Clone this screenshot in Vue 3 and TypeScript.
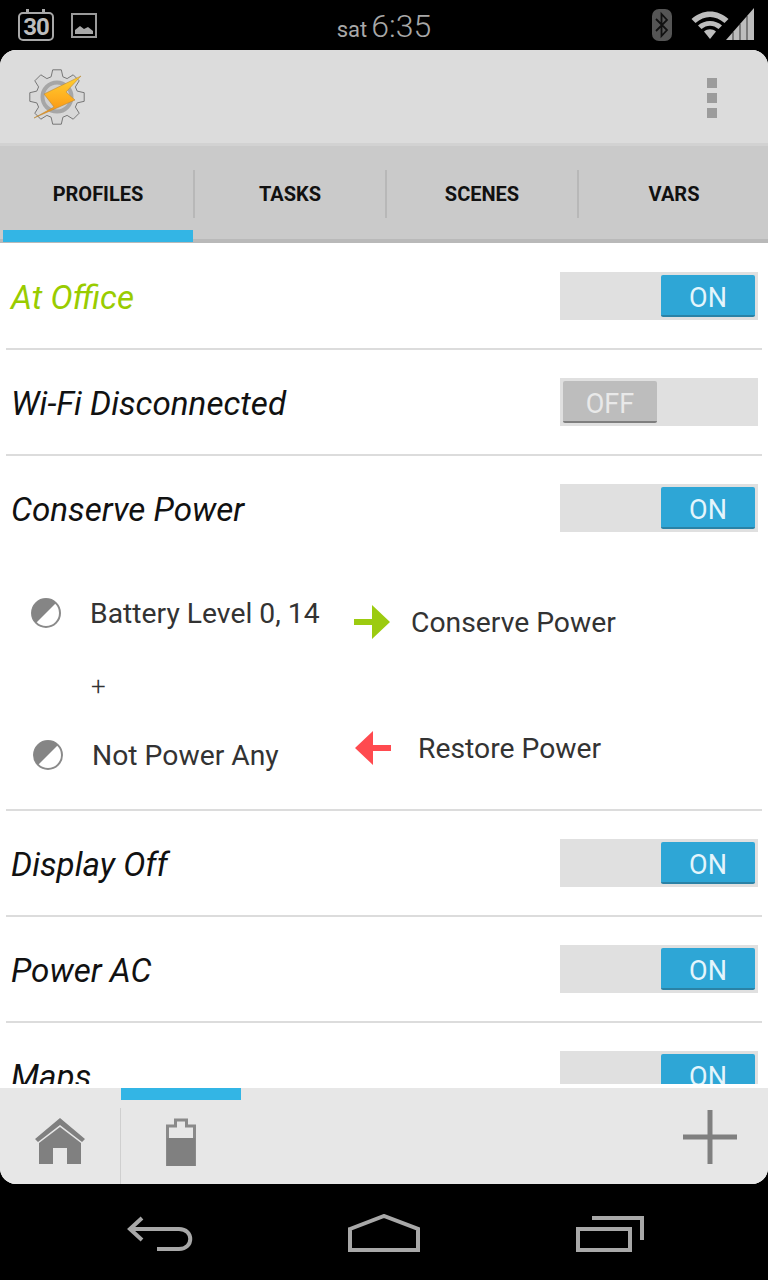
<script setup lang="ts">
const tabs = ['PROFILES', 'TASKS', 'SCENES', 'VARS']

// the gear in the logo, 8 teeth round the middle of its 58x58 box
const gearPath = (() => {
  const pts: string[] = []
  const teeth = 8
  for (let i = 0; i < teeth; i++) {
    const a = (i / teeth) * Math.PI * 2 - Math.PI / 2
    const step = (Math.PI * 2) / teeth
    const add = (r: number, off: number) => {
      pts.push(`${(28 + r * Math.cos(a + off * step)).toFixed(1)},${(28 + r * Math.sin(a + off * step)).toFixed(1)}`)
    }
    add(21, -0.36)
    add(27.5, -0.2)
    add(27.5, 0.2)
    add(21, 0.36)
  }
  return 'M' + pts.join(' L') + ' Z'
})()
</script>

<template>
  <div class="phone">
    <header class="status">
      <div class="status-left">
        <div class="calendar"><span>30</span></div>
        <svg width="26" height="25" viewBox="0 0 26 25">
          <rect x="1" y="1" width="24" height="23" fill="none" stroke="#9a9a9a" stroke-width="2" />
          <path d="M4 21 V17 L9 13 L13 16 L17 14 L22 18 V21 Z" fill="#a8a8a8" />
        </svg>
      </div>
      <div class="clock"><span class="day">sat</span> <span class="time">6:35</span></div>
      <div class="status-right">
        <svg class="bt" width="22" height="33" viewBox="0 0 22 33">
          <rect x="1" y="0" width="20" height="32" rx="7" fill="#555" />
          <path d="M5 10 L16 21 L10.5 27 V5 L16 11 L5 22" fill="none" stroke="#111" stroke-width="1.8" />
        </svg>
        <svg width="66" height="33" viewBox="0 0 66 33">
          <g transform="translate(2.5 1)">
            <path d="M1 10 C12 0 27 0 38 10 L34 14 C25 6 14 6 5 14 Z" fill="#bdbdbd" />
            <path d="M7.5 16.5 C14 10.5 25 10.5 31.5 16.5 L28 20 C23 15.5 16 15.5 11 20 Z" fill="#bdbdbd" />
            <path d="M13.5 22.5 C17 19.5 22 19.5 25.5 22.5 L19.5 30 Z" fill="#bdbdbd" />
          </g>
          <path d="M38 32 L66 0 V32 Z" fill="#bdbdbd" />
          <path d="M45 32 V24 M52 32 V16 M59 32 V8" stroke="#000" stroke-width="1" opacity="0.7" />
        </svg>
      </div>
    </header>

    <div class="app">
      <div class="action-bar">
        <svg class="logo" width="58" height="58" viewBox="0 0 58 58">
          <defs>
            <linearGradient id="bolt" x1="0" y1="0" x2="0" y2="1">
              <stop offset="0" stop-color="#ffd030" />
              <stop offset="0.5" stop-color="#ffb020" />
              <stop offset="1" stop-color="#f58a10" />
            </linearGradient>
          </defs>
          <path :d="gearPath" fill="#d8d8d8" stroke="#777" stroke-width="1" />
          <circle cx="28" cy="28" r="14.5" fill="#cfcfcf" stroke="#a6a6a6" stroke-width="4" />
          <path d="M52 7 L15 25 L25 38 L5 49 L46 31 L37 23 Z" fill="url(#bolt)" stroke="#b98a3a" stroke-width="0.6" />
        </svg>
        <div class="overflow">
          <i></i>
          <i></i>
          <i></i>
        </div>
      </div>

      <nav class="tabs">
        <div v-for="(tab, i) in tabs" :key="tab" class="tab" :class="{ active: i === 0 }">
          <span>{{ tab }}</span>
        </div>
      </nav>

      <main class="list">
        <section class="row">
          <div class="row-head">
            <span class="title green">At Office</span>
            <div class="toggle on"><div class="knob">ON</div></div>
          </div>
        </section>
        <section class="row">
          <div class="row-head">
            <span class="title">Wi-Fi Disconnected</span>
            <div class="toggle"><div class="knob">OFF</div></div>
          </div>
        </section>
        <section class="row">
          <div class="row-head">
            <span class="title">Conserve Power</span>
            <div class="toggle on"><div class="knob">ON</div></div>
          </div>
          <div class="details">
            <div class="contexts">
              <div class="context first">
                <svg width="32" height="32" viewBox="0 0 32 32">
                  <circle cx="16" cy="16" r="14" fill="#fff" stroke="#8a8a8a" stroke-width="2" />
                  <path d="M6 26 A14 14 0 0 1 26 6 Z" fill="#858585" />
                </svg>
                <span>Battery Level 0, 14</span>
              </div>
              <div class="plus">+</div>
              <div class="context second">
                <svg width="32" height="32" viewBox="0 0 32 32">
                  <circle cx="16" cy="16" r="14" fill="#fff" stroke="#8a8a8a" stroke-width="2" />
                  <path d="M6 26 A14 14 0 0 1 26 6 Z" fill="#858585" />
                </svg>
                <span>Not Power Any</span>
              </div>
            </div>
            <div class="actions">
              <div class="action enter">
                <svg width="38" height="36" viewBox="0 0 38 36">
                  <path d="M1 15 H19 V1 L37 18 L19 35 V21 H1 Z" fill="#9ccb10" />
                </svg>
                <span>Conserve Power</span>
              </div>
              <div class="action exit">
                <svg width="38" height="36" viewBox="0 0 38 36">
                  <path d="M37 15 H19 V1 L1 18 L19 35 V21 H37 Z" fill="#ff4a4f" />
                </svg>
                <span>Restore Power</span>
              </div>
            </div>
          </div>
        </section>
        <section class="row">
          <div class="row-head">
            <span class="title">Display Off</span>
            <div class="toggle on"><div class="knob">ON</div></div>
          </div>
        </section>
        <section class="row">
          <div class="row-head">
            <span class="title">Power AC</span>
            <div class="toggle on"><div class="knob">ON</div></div>
          </div>
        </section>
        <section class="row">
          <div class="row-head">
            <span class="title">Maps</span>
            <div class="toggle on"><div class="knob">ON</div></div>
          </div>
        </section>
      </main>

      <footer class="bottom">
        <div class="home-slot">
          <svg width="52" height="48" viewBox="0 0 52 48">
            <path d="M1 22 L26 1 L51 22 L48 25 L26 8 L4 25 Z" fill="#808080" />
            <path d="M5 26 L26 10 L47 26 V47 H33 V31 H19 V47 H5 Z" fill="#808080" />
          </svg>
        </div>
        <div class="project-slot">
          <svg width="30" height="48" viewBox="0 0 30 48">
            <path d="M1.5 8 H9.5 V2 H20.5 V8 H28.5 V47 H1.5 Z" fill="#e7e7e7" stroke="#8a8a8a" stroke-width="3" />
            <rect x="1" y="20" width="28" height="28" fill="#808080" />
          </svg>
        </div>
        <svg class="add" width="54" height="54" viewBox="0 0 54 54">
          <path d="M0 27 H54 M27 0 V54" stroke="#808080" stroke-width="5" />
        </svg>
      </footer>
    </div>

    <div class="nav">
      <svg width="66" height="36" viewBox="0 0 66 36">
        <path d="M15 2 L3 13 L15 24 M3 13 H52 C67 13 67 33 52 33 H30" fill="none" stroke="#a8a8a8" stroke-width="4" />
      </svg>
      <svg width="72" height="38" viewBox="0 0 72 38">
        <path d="M2 15 L36 2 L70 15 V36 H2 Z" fill="none" stroke="#a8a8a8" stroke-width="4" />
      </svg>
      <svg width="68" height="36" viewBox="0 0 68 36">
        <rect x="2" y="13" width="52" height="21" fill="none" stroke="#a8a8a8" stroke-width="4" />
        <path d="M16 2 H66 V24" fill="none" stroke="#a8a8a8" stroke-width="4" />
      </svg>
    </div>
  </div>
</template>

<style scoped>
.phone {
  width: 768px;
  height: 1280px;
  background: #000;
  display: flex;
  flex-direction: column;
  overflow: hidden;
  font-family: Roboto, "Liberation Sans", sans-serif;
}

.status {
  height: 50px;
  flex: none;
  display: grid;
  grid-template-columns: 1fr auto 1fr;
  align-items: start;
}
.status-left {
  display: flex;
  align-items: flex-start;
  gap: 17px;
  padding: 12px 0 0 18px;
}
.status-left svg {
  margin-top: 1px;
}
.calendar {
  width: 36px;
  height: 29px;
  box-sizing: border-box;
  border: 2px solid #a8a8a8;
  border-radius: 5px;
  display: flex;
  align-items: center;
  justify-content: center;
  color: #bdbdbd;
  font-size: 24px;
  font-weight: 700;
  letter-spacing: -1px;
  position: relative;
}
.calendar::before,
.calendar::after {
  content: "";
  position: absolute;
  top: -5px;
  width: 3px;
  height: 4px;
  background: #a8a8a8;
}
.calendar::before {
  left: 6px;
}
.calendar::after {
  right: 7px;
}
.clock {
  color: #a8a8a8;
  padding-top: 8px;
  line-height: 36px;
}
.day {
  font-size: 22px;
}
.time {
  font-size: 32px;
  font-weight: 300;
}
.status-right {
  display: flex;
  justify-content: flex-end;
  padding: 8px 14px 0 0;
  gap: 15px;
}
.bt {
  margin-top: 1px;
}

.app {
  height: 1134px;
  flex: none;
  background: #fff;
  border-radius: 16px;
  overflow: hidden;
  display: flex;
  flex-direction: column;
}

.action-bar {
  height: 93px;
  flex: none;
  background: #dcdcdc;
  display: flex;
  align-items: center;
  justify-content: space-between;
  padding: 0 51px 0 29px;
}
.logo {
  margin-top: 2px;
}
.overflow {
  display: flex;
  flex-direction: column;
  gap: 5px;
  margin-top: 3px;
}
.overflow i {
  display: block;
  width: 10px;
  height: 10px;
  background: #9c9c9c;
}

.tabs {
  height: 100px;
  flex: none;
  box-sizing: border-box;
  background: #cacaca;
  border-top: 3px solid #d2d2d2;
  border-bottom: 4px solid #b9b9b9;
  display: flex;
}
.tab {
  flex: 1;
  display: flex;
  align-items: center;
  justify-content: center;
  position: relative;
  font-size: 20px;
  font-weight: 700;
  color: #111;
  padding: 2px 0 0 4px;
}
.tab + .tab::before {
  content: "";
  position: absolute;
  left: 1px;
  top: 24px;
  width: 2px;
  height: 48px;
  background: #b8b8b8;
}
.tab.active::after {
  content: "";
  position: absolute;
  left: 3px;
  right: -1px;
  bottom: -3px;
  height: 12px;
  background: #33b5e5;
}

.list {
  height: 841px;
  flex: none;
  overflow: hidden;
  box-sizing: border-box;
  padding-top: 1px;
  margin-bottom: 4px;
}
.row {
  margin: 0 6px;
  border-bottom: 2px solid #dcdcdc;
}
.row-head {
  height: 104px;
  display: flex;
  align-items: center;
  justify-content: space-between;
  padding: 0 4px 0 5px;
}
.title {
  font-size: 33.2px;
  font-style: italic;
  color: #111;
  padding-top: 2px;
}
.title.green {
  color: #99cc00;
}

.toggle {
  width: 198px;
  height: 48px;
  box-sizing: border-box;
  background: #e0e0e0;
  padding: 3px;
  display: flex;
}
.toggle.on {
  justify-content: flex-end;
}
.knob {
  width: 94px;
  height: 42px;
  box-sizing: border-box;
  border-radius: 2px;
  border-bottom: 2px solid #7f7f7f;
  background: #bdbdbd;
  color: #e9e9e9;
  font-size: 27px;
  padding-top: 5px;
  display: flex;
  align-items: center;
  justify-content: center;
}
.toggle.on .knob {
  background: #2ea6d6;
  border-bottom-color: #2a82a6;
  color: #e4f5fc;
}

.details {
  height: 249px;
  display: flex;
  color: #333;
  font-size: 28.3px;
}
.contexts {
  width: 347px;
  flex: none;
  box-sizing: border-box;
  padding: 33px 0 0 24px;
}
.context {
  display: flex;
  align-items: center;
  height: 40px;
  gap: 28px;
}
.context.second {
  padding-left: 2px;
}
.plus {
  height: 30px;
  margin: 38px 0 34px 61px;
  line-height: 30px;
  font-size: 26px;
  font-weight: 300;
}
.actions {
  padding-top: 42px;
}
.action {
  display: flex;
  align-items: center;
  height: 40px;
  gap: 20px;
}
.action.exit {
  margin-top: 86px;
  gap: 26px;
  padding-left: 1px;
}

.bottom {
  height: 96px;
  flex: none;
  background: #e7e7e7;
  display: flex;
  align-items: flex-start;
}
.home-slot {
  width: 121px;
  height: 76px;
  box-sizing: border-box;
  margin-top: 20px;
  border-right: 1px solid #cfcfcf;
  padding: 9px 0 0 34px;
}
.project-slot {
  width: 120px;
  height: 96px;
  box-sizing: border-box;
  border-top: 12px solid #33b5e5;
  padding: 18px 0 0 45px;
}
.add {
  margin: 22px 31px 0 auto;
}

.nav {
  flex: 1;
  display: flex;
  align-items: flex-start;
  gap: 155px;
  padding: 32px 0 0 127px;
}
.nav svg:nth-child(2) {
  margin-top: -2px;
}
.nav svg:nth-child(3) {
  margin-left: 1px;
}
</style>

<style>
body {
  background: #000;
}
</style>
